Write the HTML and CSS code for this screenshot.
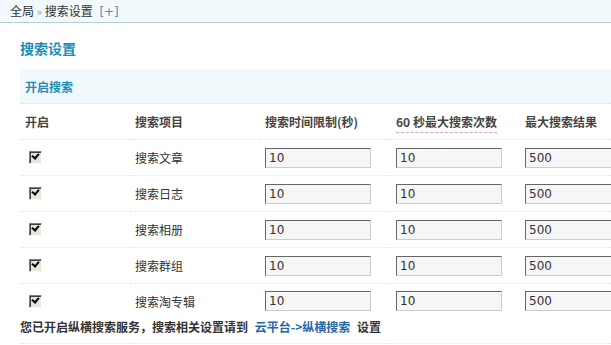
FILE: index.html
```html
<!DOCTYPE html>
<html>
<head>
<meta charset="utf-8">
<link rel="stylesheet" href="styles.css">
</head>
<body>
<div class="topbar">全局 <span class="sep">»</span> 搜索设置 <span class="plus">[+]</span></div>
<div class="content">
  <h3 class="title">搜索设置</h3>
  <table class="tb">
    <colgroup>
      <col class="k1"><col class="k2"><col class="k3"><col class="k4"><col class="k5">
    </colgroup>
    <tr class="section"><th colspan="5">开启搜索</th></tr>
    <tr class="head">
      <td>开启</td>
      <td>搜索项目</td>
      <td>搜索时间限制(秒)</td>
      <td><span class="tip">60 秒最大搜索次数</span></td>
      <td>最大搜索结果</td>
    </tr>
    <tr class="row">
      <td><span class="chk"></span></td>
      <td>搜索文章</td>
      <td><span class="inp">10</span></td>
      <td><span class="inp">10</span></td>
      <td><span class="inp">500</span></td>
    </tr>
    <tr class="row">
      <td><span class="chk"></span></td>
      <td>搜索日志</td>
      <td><span class="inp">10</span></td>
      <td><span class="inp">10</span></td>
      <td><span class="inp">500</span></td>
    </tr>
    <tr class="row">
      <td><span class="chk"></span></td>
      <td>搜索相册</td>
      <td><span class="inp">10</span></td>
      <td><span class="inp">10</span></td>
      <td><span class="inp">500</span></td>
    </tr>
    <tr class="row">
      <td><span class="chk"></span></td>
      <td>搜索群组</td>
      <td><span class="inp">10</span></td>
      <td><span class="inp">10</span></td>
      <td><span class="inp">500</span></td>
    </tr>
    <tr class="row last">
      <td><span class="chk"></span></td>
      <td>搜索淘专辑</td>
      <td><span class="inp">10</span></td>
      <td><span class="inp">10</span></td>
      <td><span class="inp">500</span></td>
    </tr>
    <tr class="foot">
      <td colspan="5">您已开启纵横搜索服务，搜索相关设置请到 <a class="lnk">云平台-&gt;纵横搜索</a> 设置</td>
    </tr>
  </table>
</div>
</body>
</html>
```
FILE: styles.css
```css
html, body {
  margin: 0;
  padding: 0;
  background: #fff;
  overflow: hidden;
}
body {
  font-family: "Noto Sans CJK SC", "DejaVu Sans", sans-serif;
  font-size: 12px;
  color: #333;
}
.topbar {
  height: 22px;
  line-height: 22px;
  padding-left: 10px;
  background: #F2F9FD;
  border-bottom: 1px solid #B5CFD9;
  color: #333;
  white-space: nowrap;
}
.sep { color: #999; font-size: 11px; }
.plus { color: #5b87b0; margin-left: 4px; font-family: "DejaVu Sans", sans-serif; }
.content {
  padding-left: 20px;
  width: 591px;
  overflow: hidden;
}
.title {
  margin: 14px 0 0 0;
  height: 22px;
  line-height: 22px;
  font-size: 14px;
  font-weight: bold;
  color: #1c8db7;
}
.tb {
  margin-top: 10px;
  border-collapse: collapse;
  table-layout: fixed;
  width: 625px;
}
.k1 { width: 110px; }
.k2 { width: 130px; }
.k3 { width: 131px; }
.k4 { width: 129px; }
.k5 { width: 125px; }
.tb td, .tb th {
  padding: 0 0 0 5px;
  text-align: left;
  white-space: nowrap;
  vertical-align: middle;
}
.section th {
  height: 34px;
  background: #F2F9FD;
  color: #1c8db7;
  font-weight: bold;
  border-bottom: 1px dotted #D4E6EE;
}
.head td {
  height: 35px;
  font-weight: bold;
  color: #444;
  border-bottom: 1px dotted #D4E6EE;
}
.tip {
  border-bottom: 1px dashed #d9a3b8;
  padding-bottom: 2px;
}
.row td {
  height: 35px;
  border-bottom: 1px dotted #DDE6EA;
}
.row.last td { border-bottom: none; height: 34px; }
.chk {
  display: block;
  box-sizing: border-box;
  width: 13px;
  height: 13px;
  margin-left: 4px;
  border: 1px solid;
  border-color: #808080 #fff #fff #808080;
  box-shadow: inset 1px 1px 0 #404040;
  background: #e8e6da;
  position: relative;
}
.chk::after {
  content: "";
  position: absolute;
  left: 2px;
  top: 1px;
  width: 5px;
  height: 3px;
  border-left: 2px solid #000;
  border-bottom: 2px solid #000;
  transform: rotate(-50deg);
  transform-origin: center;
}
.inp {
  display: block;
  box-sizing: border-box;
  width: 106px;
  height: 20px;
  line-height: 18px;
  padding-left: 3px;
  border: 1px solid;
  border-color: #666 #ccc #ccc #666;
  background: #f6f6f6;
  font-family: "DejaVu Sans", sans-serif;
  font-size: 12px;
  color: #333;
}
.foot td {
  height: 16px;
  padding: 0 0 8px 0;
  font-weight: bold;
  color: #333;
  border-bottom: 1px dotted #DDE6EA;
}
.lnk {
  color: #2366a8;
  margin: 0 4px 0 4px;
}
```
